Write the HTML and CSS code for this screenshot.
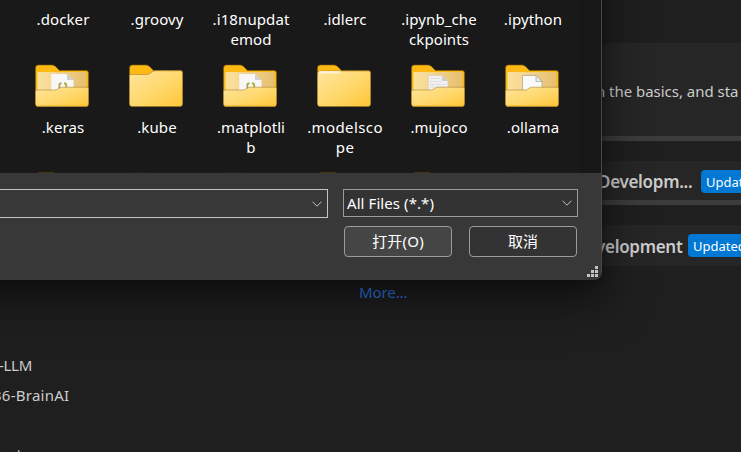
FILE: index.html
```
<!DOCTYPE html>
<html lang="zh-CN">
<head>
<meta charset="utf-8">
<title>Open</title>
<link rel="stylesheet" href="styles.css">
</head>
<body>
<svg width="0" height="0" class="defs">
  <defs>
    <linearGradient id="front" x1="0" y1="0" x2="1" y2="1"><stop offset="0" stop-color="#ffe59b"/><stop offset=".5" stop-color="#ffd970"/><stop offset="1" stop-color="#ffc636"/></linearGradient>
    <linearGradient id="inner" x1="0" y1="0" x2="1" y2="0"><stop offset="0" stop-color="#fce2a0"/><stop offset="1" stop-color="#e5bf70"/></linearGradient>
    <linearGradient id="sheet" x1="0" y1="0" x2="0" y2="1"><stop offset="0" stop-color="#fff" stop-opacity=".95"/><stop offset="1" stop-color="#fff" stop-opacity="0"/></linearGradient>
    <symbol id="back" viewBox="0 0 54 44"><path d="M.5 4Q.5 1 3.500 1H17Q19 1 20.500 2.500L24.500 6.500H51Q53.500 6.500 53.500 9V40H.5Z" fill="#fcb813" stroke="#805b10" stroke-width=".6"/></symbol>
    <symbol id="open" viewBox="0 0 54 44"><use href="#back"/><rect x="2.500" y="8" width="49" height="24" rx="1" fill="url(#inner)"/></symbol>
    <symbol id="flap" viewBox="0 0 54 44"><path d="M.5 27Q.5 26 2 26H20Q22 26 24 24.300Q25.500 23.200 27 23.200H52Q53.500 23.200 53.500 24.500V40Q53.500 42.500 51 42.500H3Q.5 42.500 .5 40Z" fill="url(#front)" stroke="#9a7223" stroke-width=".5"/><path d="M1.500 41.800H52.500" stroke="#f8bd34"/></symbol>
    <symbol id="json" viewBox="0 0 54 44"><use href="#open"/><path d="M16.200 10H31.500L38.500 16V30H16.200Z" fill="#f7f7f7"/><path d="M32 10V16H38.500Z" fill="#d0d0d0"/><path d="M26.500 19.500H25.500Q24.300 19.500 24.300 21V25M29 19.500H30Q31.200 19.500 31.200 21V25" fill="none" stroke="#a9ab3d" stroke-width="1.800"/><use href="#flap"/></symbol>
    <symbol id="doc" viewBox="0 0 54 44"><use href="#open"/><path d="M17.500 11.500H31L36.800 17V30H17.500Z" fill="#f1f1f1" stroke="#ccc" stroke-width=".5"/><path d="M19 14.500H30M19 17.500H31M19 20.500H35M19 23H35" stroke="#dcdcdc" stroke-width=".8"/><path d="M31 11.500V17H37Z" fill="#ccc"/><use href="#flap"/></symbol>
    <symbol id="blank" viewBox="0 0 54 44"><use href="#open"/><path d="M17.500 11.500H31L37 17.500V30H17.500Z" fill="#fafafa" stroke="#a9a08d" stroke-width=".7"/><path d="M31 11.500V17.500H37Z" fill="#eee" stroke="#aaa" stroke-width=".8"/><use href="#flap"/></symbol>
    <symbol id="empty" viewBox="0 0 54 44"><use href="#back"/><path d="M.5 11.500Q.5 10.500 2 10.500H18Q20 10.500 22 8.500Q24 6.800 26 6.800H52Q53.500 6.800 53.500 9V40Q53.500 42.500 51 42.500H3Q.5 42.500 .5 40Z" fill="url(#front)" stroke="#9a7223" stroke-width=".5"/></symbol>
    <symbol id="full" viewBox="0 0 54 44"><use href="#back"/><path d="M.5 9.500Q.5 7 3 7H52Q53.500 7 53.500 9V40Q53.500 42.500 51 42.500H3Q.5 42.500 .5 40Z" fill="url(#front)" stroke="#9a7223" stroke-width=".5"/><path d="M2 7.300H24L22 10.500H2Z" fill="url(#sheet)"/></symbol>
  </defs>
</svg>
<main class="page">
  <section class="recent">
    <a class="more">More...</a>
    <p class="llm">-LLM</p>
    <p class="brain">36-BrainAI</p>
    <p class="ject">ject</p>
  </section>
  <section class="cards">
    <article class="card tall"><p class="basics">n the basics, and sta</p></article>
    <article class="card barred"><h3 class="t1">Developm...</h3><span class="badge">Updated</span></article>
    <article class="card"><h3 class="t2">velopment</h3><span class="badge">Updated</span></article>
  </section>
</main>
<div class="dialog">
  <div class="files">
    <div class="grid first">
      <span class="label">.docker</span><span class="label">.groovy</span><span class="label">.i18nupdat<br>emod</span><span class="label">.idlerc</span><span class="label">.ipynb_che<br>ckpoints</span><span class="label">.ipython</span>
    </div>
    <div class="grid">
      <div class="item"><svg><use href="#json"/></svg><span class="label">.keras</span></div>
      <div class="item"><svg><use href="#empty"/></svg><span class="label">.kube</span></div>
      <div class="item"><svg><use href="#json"/></svg><span class="label">.matplotli<br>b</span></div>
      <div class="item"><svg><use href="#full"/></svg><span class="label wide">.modelsco<br>pe</span></div>
      <div class="item"><svg><use href="#doc"/></svg><span class="label">.mujoco</span></div>
      <div class="item"><svg><use href="#blank"/></svg><span class="label">.ollama</span></div>
    </div>
    <div class="grid peek"><i></i><b></b><b></b><i></i><i></i><b></b></div>
  </div>
  <footer class="footer">
    <div class="name-box"><svg class="chev" viewBox="0 0 10 6"><path d="M.5 .7L5 5.200L9.500 .7"/></svg></div>
    <div class="controls">
      <div class="filter"><span class="filter-text">All Files (*.*)</span><svg class="chev" viewBox="0 0 10 6"><path d="M.5 .7L5 5.200L9.500 .7"/></svg></div>
      <div class="buttons"><button class="primary">打开(O)</button><button>取消</button></div>
    </div>
    <svg class="grip" viewBox="0 0 11 11"><path d="M8 0h3v3h-3zM4 4h3v3h-3zM8 4h3v3h-3zM0 8h3v3h-3zM4 8h3v3h-3zM8 8h3v3h-3z"/></svg>
  </footer>
</div>
</body>
</html>
```
FILE: styles.css
```
* { box-sizing: border-box; }
body { margin: 0; width: 741px; height: 452px; overflow: hidden; background: #1f1f1f; color: #ccc; font: 15px/20px "Noto Sans", "Noto Sans CJK SC", sans-serif; }
.defs { position: absolute; }
p, h3 { margin: 0; white-space: nowrap; }
.page { display: grid; grid-template-columns: 596px 145px; grid-template-rows: 452px; height: 452px; overflow: hidden; }
.recent { padding-top: 282px; display: flex; flex-direction: column; align-items: flex-start; height: 452px; overflow: hidden; }
.more { margin-left: 359px; color: #3279e6; letter-spacing: -.1px; }
.llm { margin: 53px 0 10px -1px; letter-spacing: -.3px; }
.brain { margin-left: -7px; letter-spacing: .25px; }
.ject { margin: 39px 0 0 -3px; }
.cards { display: flex; flex-direction: column; gap: 20px; padding-top: 43px; overflow: hidden; }
.card { display: flex; align-items: center; height: 41px; background: #262626; flex: none; white-space: nowrap; }
.tall { height: 98px; padding-top: 2px; border-bottom: 5px solid #3c3c3c; }
.barred { height: 44px; border-bottom: 5px solid #3c3c3c; }
.basics { letter-spacing: -.03px; }
h3 { flex: none; padding-top: 2px; font-size: 17px; font-weight: 600; line-height: 24px; letter-spacing: -.3px; }
.t1 { width: 105px; padding-left: 2px; }
.t2 { width: 92px; }
.barred .badge { margin-top: 2px; }
.badge { flex: none; height: 23px; padding: 1px 5px 0; border-radius: 4px; background: #0078d4; color: #fff; font-size: 13px; line-height: 22px; }
.dialog { position: absolute; left: -300px; top: -200px; width: 902px; height: 480px; padding: 200px 0 0 300px; border-right: 1px solid #484848; border-radius: 8px; overflow: hidden; background: #191919; box-shadow: 0 18px 46px rgba(0,0,0,.6), 0 0 6px rgba(0,0,0,.3); }
.files { height: 173px; overflow: hidden; background: linear-gradient(90deg, #191919 580px, #171717 580px); }
.grid { display: grid; grid-template-columns: repeat(6, 94px); padding-left: 15px; height: 108px; }
.first { height: 64px; padding-top: 9px; }
.item { display: flex; flex-direction: column; align-items: center; gap: 9px; }
.item svg { width: 54px; height: 44px; }
.label { padding-left: 2px; color: #fff; text-align: center; letter-spacing: .1px; }
.wide { letter-spacing: .4px; }
.peek i, .peek b { width: 16px; height: 1px; margin-left: 23px; background: #49330e; }
.peek b { background: #202016; }
.footer { display: flex; align-items: flex-start; gap: 15px; height: 107px; padding-top: 16px; background: #383838; }
.name-box { display: flex; align-items: center; justify-content: flex-end; width: 328px; height: 29px; padding-right: 5px; border: 1px solid #c4c4c4; border-left: 0; }
.controls { display: flex; flex-direction: column; gap: 9px; width: 235px; }
.filter { display: flex; align-items: center; justify-content: space-between; height: 28px; padding: 0 5px 0 3px; background: #333; border: 1px solid #9b9b9b; color: #fff; letter-spacing: .08px; }
.chev { width: 10px; height: 6px; fill: none; stroke: #c4c4c4; }
.buttons { display: flex; gap: 17px; padding-left: 1px; }
button { width: 108px; height: 31px; padding: 0 0 2px; border: 1px solid #9b9b9b; border-radius: 4px; background: #333; color: #fff; font: 15px/20px "Noto Sans", "Noto Sans CJK SC", sans-serif; }
.primary { background: #454545; letter-spacing: .2px; }
.grip { align-self: flex-end; width: 11px; height: 11px; margin: 0 0 3px -6px; fill: #c4c4c4; }
```
